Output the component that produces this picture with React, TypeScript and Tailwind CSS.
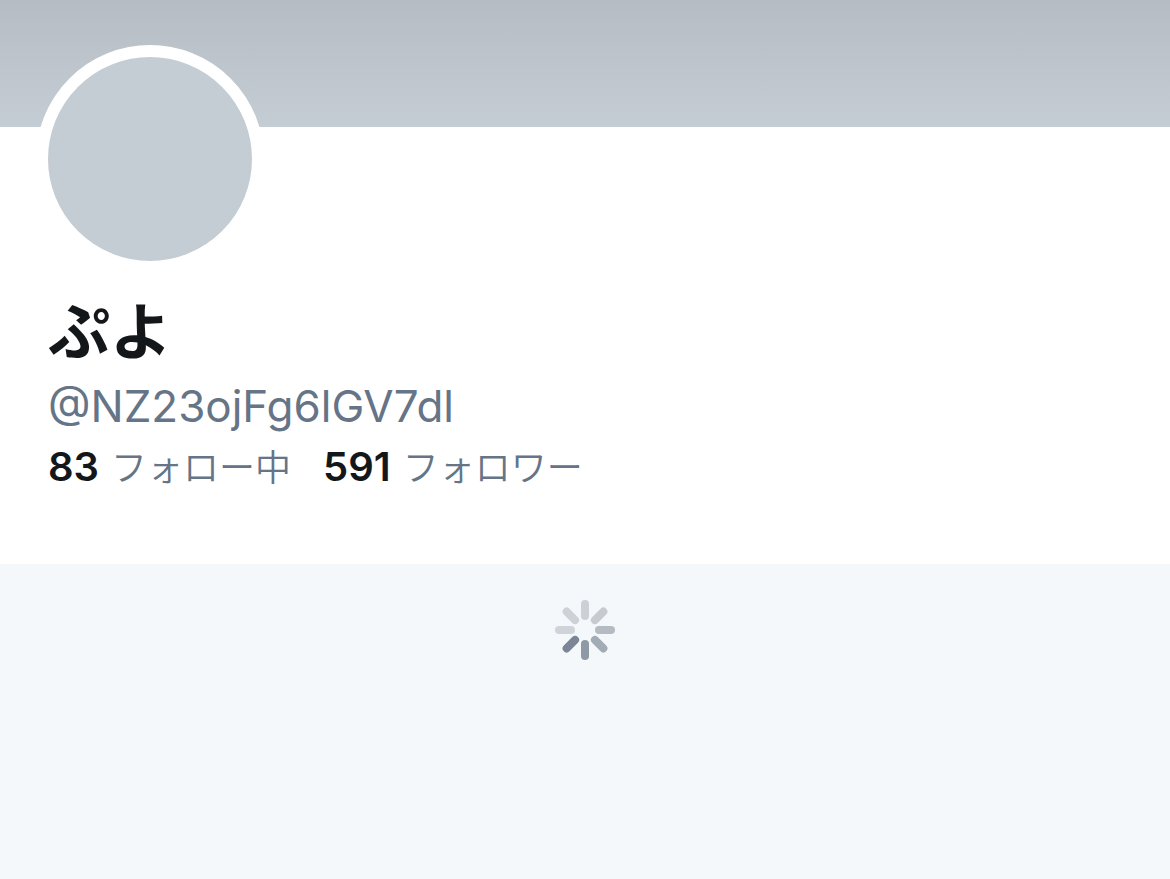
const spokes = [
  { angle: 0, color: '#ccd1d6' },
  { angle: 45, color: '#c6cbd0' },
  { angle: 90, color: '#b5bbc2' },
  { angle: 135, color: '#a3abb5' },
  { angle: 180, color: '#8f99a6' },
  { angle: 225, color: '#7a8595' },
  { angle: 270, color: '#d0d4da' },
  { angle: 315, color: '#ced2d6' },
];

function Spinner() {
  return (
    <svg role="status" aria-label="読み込み中" className="size-15" viewBox="0 0 60 60">
      {spokes.map(({ angle, color }) => (
        <rect key={angle} x="26" y="0" width="8" height="20" rx="4" fill={color} transform={`rotate(${angle} 30 30)`} />
      ))}
    </svg>
  );
}

function Stat({ count, label }: { count: number; label: string }) {
  return (
    <a href="#" className="flex items-baseline gap-3">
      <span className="text-[40px] font-semibold text-[#14171a]">{count}</span>
      <span className="text-[36px] font-[350] text-[#657486]">{label}</span>
    </a>
  );
}

export default function App() {
  return (
    <div className="flex min-h-screen flex-col bg-[#f5f8fb] font-['Inter','Noto_Sans_CJK_JP',sans-serif]">
      <header className="bg-white pb-[70px]">
        <div className="h-[127px] bg-linear-to-b from-[#b6bcc4] to-[#c5cdd4]" />
        <div className="px-12">
          <div className="-mt-[82px] -ml-3 size-57 rounded-full border-12 border-white bg-[#c5cdd4]" />
          <h1 className="mt-6 text-[62px] leading-[72px] font-bold text-[#14171a]">ぷよ</h1>
          <p className="mt-2.5 text-[44px] leading-[54px] text-[#657486]">@NZ23ojFg6lGV7dl</p>
          <div className="mt-2 flex gap-8 leading-[51px]">
            <Stat count={83} label="フォロー中" />
            <Stat count={591} label="フォロワー" />
          </div>
        </div>
      </header>
      <main className="flex justify-center pt-9">
        <Spinner />
      </main>
    </div>
  );
}
